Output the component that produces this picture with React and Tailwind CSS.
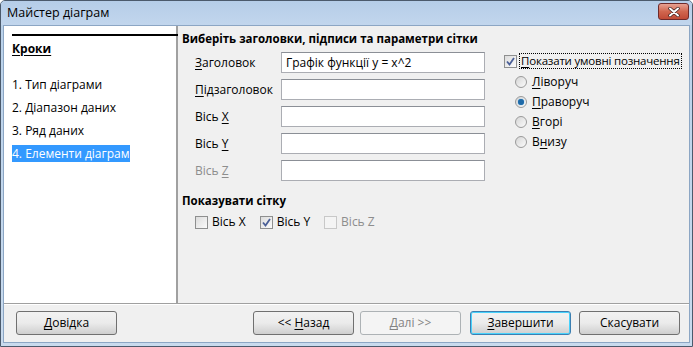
import React from 'react';

const FONT = { fontFamily: '"Open Sans", "Noto Sans", "Liberation Sans", sans-serif' };

// Underlined mnemonic letter, like Windows accelerator keys
function U({ children }) {
  return <span className="underline underline-offset-2">{children}</span>;
}

function TextBox({ value }) {
  return (
    <div className="w-[204px] h-[21px] bg-white border border-[#abadb3] border-t-[#8b8f96] flex items-center px-[4px] text-[12px] text-black">
      {value}
    </div>
  );
}

function CheckBox({ checked, disabled }) {
  return (
    <div
      className={`shrink-0 w-[13px] h-[13px] border flex items-center justify-center ${
        disabled ? 'border-[#c8c8c8] bg-[#f4f4f4]' : 'border-[#8e8f8f] bg-gradient-to-br from-[#dcdcdc] to-[#fbfbfb]'
      }`}
    >
      {checked && (
        <svg width="9" height="9" viewBox="0 0 9 9">
          <path d="M1 4.5 L3.5 7.5 L8 1" fill="none" stroke="#4a5f97" strokeWidth="1.8" />
        </svg>
      )}
    </div>
  );
}

function Radio({ checked }) {
  return (
    <div className="shrink-0 w-[12px] h-[12px] rounded-full border border-[#9a9a9a] bg-gradient-to-br from-[#d6d6d6] to-[#fbfbfb] flex items-center justify-center">
      {checked && <div className="w-[6px] h-[6px] rounded-full bg-[#1f6aa8] shadow-[0_0_1px_#3b9de0]" />}
    </div>
  );
}

function Button({ children, disabled, primary }) {
  let cls = 'border-[#707070] bg-gradient-to-b from-[#f2f2f2] via-[#ebebeb] to-[#cfcfcf] text-black';
  if (disabled) cls = 'border-[#adb2b5] bg-[#f4f4f4] text-[#838383]';
  if (primary) cls = 'border-[#3c7fb1] bg-gradient-to-b from-[#f2f2f2] via-[#ebebeb] to-[#cfcfcf] text-black shadow-[inset_0_0_0_1px_#48d2fc]';
  return (
    <div className={`w-[101px] h-[24px] rounded-[3px] border flex items-center justify-center whitespace-pre text-[12px] ${cls}`}>
      {children}
    </div>
  );
}

export default function App() {
  const steps = ['1. Тип діаграми', '2. Діапазон даних', '3. Ряд даних', '4. Елементи діаграм'];

  return (
    <div style={FONT} className="w-[693px] h-[347px] flex flex-col bg-gradient-to-b from-[#b9d1ea] to-[#c9dbee] border border-[#4b5a6c] rounded-t-[5px] overflow-hidden">
      {/* title bar */}
      <div className="h-[24px] flex items-center justify-between pl-[6px] pr-[3px] bg-gradient-to-b from-[#b5cde8] to-[#c2d6ed]">
        <span className="text-[12.5px] text-black">Майстер діаграм</span>
        <div className="w-[31px] h-[17px] mt-[-3px] rounded-[3px] border border-[#6e2a2a] bg-gradient-to-b from-[#e7a192] via-[#d0664f] to-[#c04a36] flex items-center justify-center">
          <svg width="12" height="10" viewBox="0 0 12 10">
            <path d="M2 1.5 L10 8.5 M10 1.5 L2 8.5" stroke="#3a1e1e" strokeWidth="3.4" strokeLinecap="round" />
            <path d="M2 1.5 L10 8.5 M10 1.5 L2 8.5" stroke="#ffffff" strokeWidth="2" strokeLinecap="round" />
          </svg>
        </div>
      </div>

      {/* body */}
      <div className="flex-1 flex flex-col mx-[2px] mb-[3px] border border-[#8ca6c4] bg-[#f0f0f0]">
        <div className="flex-1 flex border-b border-[#a0a0a0] shadow-[0_1px_0_#ffffff]">
          {/* steps */}
          <div className="w-[174px] bg-white border-r-2 border-[#a0a0a0] pl-[8px] pt-[8px] text-[12px] text-black">
            <div className="border-t-2 border-black mr-[-2px]" />
            <div className="mt-[5px] font-bold underline underline-offset-2 leading-[16px]">Кроки</div>
            <div className="mt-[16px] flex flex-col">
              {steps.map((s, i) => (
                <div key={s} className="h-[23px] flex items-center">
                  <span className={`leading-[17px] ${i === 3 ? 'bg-[#3399ff] text-white' : ''}`}>{s}</span>
                </div>
              ))}
            </div>
          </div>

          {/* settings */}
          <div className="flex-1 pl-[4px] pt-[5px] text-[12px] text-black">
            <div className="flex">
              <div className="w-[322px] shrink-0">
                <div className="h-[16px] leading-[16px] font-bold text-[11.5px] whitespace-nowrap">Виберіть заголовки, підписи та параметри сітки</div>
                <div className="mt-[5px] flex flex-col gap-[6px] pl-[13px]">
                  <div className="flex items-center">
                    <span className="w-[86px]"><U>З</U>аголовок</span>
                    <TextBox value="Графік функції y = x^2" />
                  </div>
                  <div className="flex items-center">
                    <span className="w-[86px]"><U>П</U>ідзаголовок</span>
                    <TextBox />
                  </div>
                  <div className="flex items-center">
                    <span className="w-[86px]">Вісь <U>X</U></span>
                    <TextBox />
                  </div>
                  <div className="flex items-center">
                    <span className="w-[86px]">Вісь <U>Y</U></span>
                    <TextBox />
                  </div>
                  <div className="flex items-center">
                    <span className="w-[86px] text-[#8d8d8d]">Вісь <U>Z</U></span>
                    <TextBox />
                  </div>
                </div>
              </div>

              <div className="mt-[22px] flex flex-col">
                <div className="flex items-center h-[16px]">
                  <CheckBox checked />
                  <span className="ml-[2px] px-[1px] border border-dotted border-black leading-[14px] whitespace-nowrap text-[11.5px] tracking-[-0.2px]">
                    <U>П</U>оказати умовні позначення
                  </span>
                </div>
                <div className="mt-[5px] ml-[11px] flex flex-col gap-[4px]">
                  {[
                    [<><U>Л</U>іворуч</>, false],
                    [<><U>П</U>раворуч</>, true],
                    [<><U>В</U>горі</>, false],
                    [<>В<U>н</U>изу</>, false],
                  ].map(([label, on], i) => (
                    <div key={i} className="flex items-center h-[16px]">
                      <Radio checked={on} />
                      <span className="ml-[5px]">{label}</span>
                    </div>
                  ))}
                </div>
              </div>
            </div>

            <div className="mt-[12px] h-[16px] leading-[16px] font-bold text-[11.5px]">Показувати сітку</div>
            <div className="mt-[5px] pl-[13px] flex items-center h-[16px]">
              <CheckBox />
              <span className="ml-[4px]">Вісь X</span>
              <div className="ml-[14px]"><CheckBox checked /></div>
              <span className="ml-[4px]">Вісь Y</span>
              <div className="ml-[14px]"><CheckBox disabled /></div>
              <span className="ml-[4px] text-[#8d8d8d]">Вісь Z</span>
            </div>
          </div>
        </div>

        {/* buttons */}
        <div className="h-[38px] flex items-center pl-[12px] pr-[9px]">
          <Button><U>Д</U>овідка</Button>
          <div className="flex-1" />
          <div className="flex gap-[6px]">
            <Button>{'<< '}<U>Н</U>азад</Button>
            <Button disabled><U>Д</U>алі &gt;&gt;</Button>
          </div>
          <div className="ml-[9px] flex gap-[8px]">
            <Button primary><U>З</U>авершити</Button>
            <Button>Скасувати</Button>
          </div>
        </div>
      </div>
    </div>
  );
}
